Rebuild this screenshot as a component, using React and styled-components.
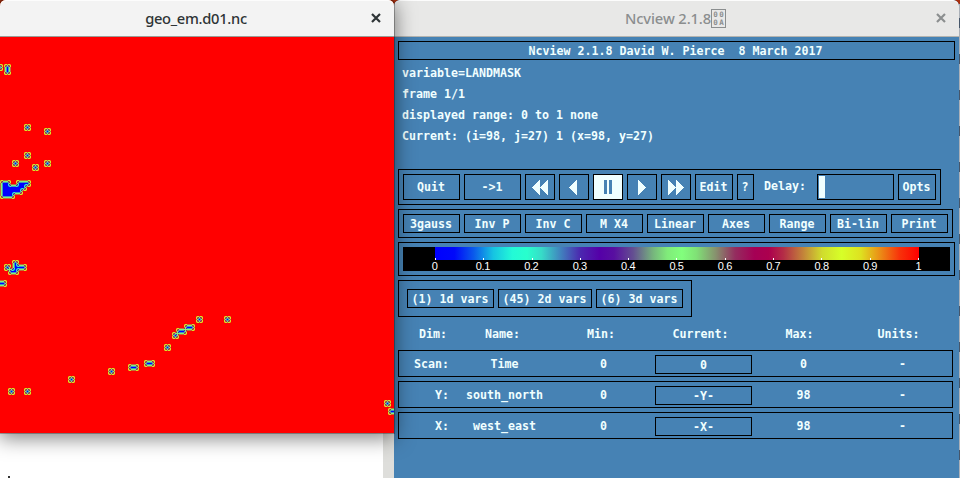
import React from "react";
import styled, { createGlobalStyle, css } from "styled-components";

const INK = "#f0ffff";
const STEEL = "#4682b4";

const GlobalStyle = createGlobalStyle`
  * { box-sizing: border-box; }
  html, body { margin: 0; padding: 0; }
  body { width: 960px; height: 478px; overflow: hidden; background: #fff; }
`;

const Desktop = styled.main`
  display: flex;
  width: 960px;
  height: 478px;
  overflow: hidden;
  background: #a8300f;
`;

const LeftColumn = styled.div`
  display: flex;
  flex-direction: column;
  flex: none;
  width: 394px;
  height: 478px;
  position: relative;
  z-index: 1;
`;

const MapWindow = styled.section`
  flex: none;
  height: 433px;
  position: relative;
  border-radius: 5px 5px 0 0;
  box-shadow: 0 4px 20px 1px rgba(0, 0, 0, 0.5), 0 0 0 1px rgba(0, 0, 0, 0.28);
`;

const TitleBar = styled.header`
  display: grid;
  grid-template-columns: 1fr;
  align-items: center;
  height: 37px;
  position: relative;
  font: 500 14.7px/20px "Noto Sans", "Open Sans", sans-serif;
  border-bottom: 1px solid ${(p) => (p.$active ? "#9b9b95" : "#b4b4b0")};
  border-radius: 6px 6px 0 0;
  color: ${(p) => (p.$active ? "#2e3436" : "#8b8e8f")};
  background: ${(p) => (p.$active ? "#f3f3f3" : "#e8e8e7")};
  box-shadow: inset 0 1px 0 #fcfcfc;
`;

const Title = styled.h1`
  display: flex;
  justify-content: center;
  align-items: center;
  margin: 0;
  padding-right: ${(p) => p.$shift || 0}px;
  font: inherit;
  letter-spacing: ${(p) => p.$track || 0}px;
  white-space: pre;
`;

const CloseIcon = styled.svg`
  position: absolute;
  top: 13px;
  right: ${(p) => p.$right}px;
  width: 10px;
  height: 10px;
  fill: none;
  stroke: currentColor;
  stroke-width: 2.2;
`;

const MissingGlyph = styled.span`
  display: grid;
  grid-template-columns: 6px 6px;
  justify-content: center;
  align-content: center;
  justify-items: center;
  width: 15px;
  height: 19px;
  margin-top: 1px;
  border: 1px solid currentColor;
  font: bold 7.5px/8px "DejaVu Sans Mono", monospace;
  letter-spacing: 0;
`;

const MapSvg = styled.svg`
  display: block;
  width: 394px;
  height: 396px;
  background: #f00;
`;

const Underlay = styled.div`
  display: flex;
  flex: 1;
  position: relative;
  z-index: -1;
  background: #fff;
`;

const Paper = styled.div`
  display: flex;
  align-items: flex-end;
  flex: 1;
  padding-left: 8px;
  background: #fff;
`;

const Speck = styled.i`
  width: 2px;
  height: 2px;
  background: #333;
`;

const PaperEdge = styled.div`
  width: 11px;
  background: #dededb;
`;

const MainWindow = styled.section`
  flex: none;
  width: 565px;
  height: 478px;
  background: ${STEEL};
  border-radius: 6px 6px 0 0;
  overflow: hidden;
  color: ${INK};
  font: bold 11.63px/17px "DejaVu Sans Mono", "Liberation Mono", monospace;
`;

const Body = styled.div`
  display: flex;
  flex-direction: column;
  align-items: flex-start;
  gap: 4px;
  padding: 4px 4px 0;
  white-space: pre;
`;

const framed = css`
  border: 1px solid #000;
`;

const Banner = styled.div`
  ${framed}
  width: 557px;
  height: 19px;
  padding-right: 2px;
  line-height: 18px;
  text-align: center;
`;

const Info = styled.div`
  height: 102px;
  padding-left: 4px;
  margin-top: -1px;
  line-height: 21px;
`;

const Group = styled.div`
  ${framed}
  display: flex;
  gap: 4px;
  width: ${(p) => p.$w}px;
  height: ${(p) => p.$h}px;
  padding: ${(p) => p.$pad || "4px"};
`;

const Button = styled.button`
  ${framed}
  display: flex;
  align-items: center;
  justify-content: center;
  flex: none;
  width: ${(p) => p.$w || 57}px;
  height: 100%;
  margin: 0;
  padding: ${(p) => (p.$low ? "2px 1px 0 0" : "0 1px 0 0")};
  font: inherit;
  white-space: pre;
  color: ${(p) => (p.$on ? STEEL : INK)};
  background: ${(p) => (p.$on ? INK : "transparent")};
`;

const Glyph = styled.svg`
  flex: none;
  width: 20px;
  height: 18px;
  margin-left: 1px;
  fill: currentColor;
  shape-rendering: crispEdges;
`;

const DelayLabel = styled.span`
  width: 55px;
  padding-left: 6px;
  line-height: 24px;
`;

const DelayTrack = styled.div`
  ${framed}
  width: 77px;
  padding: 1px;
`;

const DelayThumb = styled.div`
  width: 6px;
  height: 22px;
  background: ${INK};
`;

const ColorBar = styled.div`
  width: 547px;
  height: 24px;
  padding: 0 32px;
  background: #000;
`;

const Ramp = styled.div`
  display: flex;
  align-items: flex-end;
  justify-content: space-between;
  width: 484px;
  height: 13px;
`;

const Tick = styled.i`
  width: 1px;
  height: 2px;
  background: #fff;
`;

const Scale = styled.div`
  display: flex;
  justify-content: space-between;
  width: 484px;
  font: 11px/12px "Liberation Sans", Arial, sans-serif;
  color: #fff;
`;

const ScaleMark = styled.span`
  display: flex;
  justify-content: center;
  width: 1px;
  margin-left: -1px;
  letter-spacing: -0.4px;
`;

const DimHead = styled.div`
  display: grid;
  grid-template-columns: 49px 111px 86px 113px 85px 113px;
  height: 25px;
  line-height: 27px;
  text-align: center;
`;

const DimRow = styled.div`
  ${framed}
  display: grid;
  grid-template-columns: 50px 111px 87px 113px 87px 111px;
  width: 555px;
  height: 27px;
  line-height: 26px;
  text-align: center;
`;

const DimCell = styled.span`
  text-align: ${(p) => (p.$right ? "right" : "center")};
`;

const CurrentButton = styled(Button)`
  width: 97px;
  height: 19px;
  margin: 4px 0 0 8px;
  padding: 0;
`;

const Behind = styled.div`
  flex: 1;
  margin-top: 4px;
  background: repeating-linear-gradient(#aab0b8 0 14px, #46566a 14px 24px, #aab0b8 24px 36px);
`;

const STOPS = [
  [0, 0, 0, 255], [0.04, 0, 8, 250], [0.08, 10, 90, 235], [0.12, 22, 195, 226],
  [0.16, 35, 250, 215], [0.19, 40, 255, 205], [0.22, 55, 220, 200], [0.26, 65, 130, 190],
  [0.3, 75, 40, 175], [0.34, 85, 0, 168], [0.37, 88, 15, 160], [0.41, 100, 80, 145],
  [0.45, 118, 180, 125], [0.48, 128, 235, 122], [0.51, 130, 255, 125], [0.54, 128, 225, 118],
  [0.58, 135, 145, 110], [0.62, 148, 45, 95], [0.66, 165, 0, 85], [0.69, 172, 0, 78],
  [0.72, 180, 45, 70], [0.76, 195, 130, 58], [0.8, 208, 220, 45], [0.84, 215, 255, 40],
  [0.88, 222, 225, 32], [0.92, 235, 140, 22], [0.96, 248, 50, 10], [1, 255, 0, 0],
];

function colorAt(v) {
  const i = Math.max(1, STOPS.findIndex((s) => s[0] >= v));
  const a = STOPS[i - 1];
  const b = STOPS[i];
  const t = (v - a[0]) / (b[0] - a[0]);
  const ch = (k) => Math.round(a[k] + (b[k] - a[k]) * t);
  return `rgb(${ch(1)},${ch(2)},${ch(3)})`;
}

const GradientRamp = styled(Ramp)`
  background: linear-gradient(to right, ${STOPS.map((s) => `rgb(${s[1]},${s[2]},${s[3]}) ${s[0] * 100}%`).join(", ")});
`;

/* Water cells of the mask: a row position followed by its column positions. */
const WATER = [
  [67, -1, 7], [71, 7], [127, 27], [131, 47], [155, 27], [163, 15, 47], [167, 35],
  [183, 3, 7, 19, 23, 27], [187, 3, 7, 11, 15, 19, 23], [191, 3, 7, 11, 15, 19], [195, 3, 7, 11],
  [263, 15], [267, 7, 15, 19, 23], [271, 11, 15], [283, -1, 3],
  [319, 199, 227], [327, 187, 191], [331, 179, 183], [335, 175], [347, 167],
  [363, 147, 151], [367, 131, 135], [371, 111], [379, 71], [391, 11, 27],
  [403, 387], [411, 391, 395],
];

/* Bilinear blend of the 4px mask cells, one entry per pixel that is not full land. */
function blendMask() {
  const depth = new Map();
  WATER.forEach(([y, ...xs]) => xs.forEach((x) => {
    for (let dy = -3; dy <= 3; dy++) for (let dx = -3; dx <= 3; dx++) {
      const key = `${x + dx},${y + dy}`;
      const w = (1 - Math.abs(dx) / 4) * (1 - Math.abs(dy) / 4);
      depth.set(key, (depth.get(key) || 0) + w);
    }
  }));
  return [...depth].map(([key, d]) => {
    const [x, y] = key.split(",").map(Number);
    return { x, y, fill: colorAt(1 - Math.min(1, d)) };
  });
}
const PIXELS = blendMask();

const Close = ({ right }) => (
  <CloseIcon $right={right} viewBox="0 0 10 10"><path d="M1 1 9 9M9 1 1 9" /></CloseIcon>
);

const ICONS = {
  rewind: "M10 2V17L2 9.5ZM18 2V17L10 9.5Z",
  back: "M13 2V17L5 9.5Z",
  pause: "M6 2h3v14H6zM11 2h3v14h-3z",
  play: "M6 2V17L14 9.5Z",
  forward: "M2 2V17L10 9.5ZM10 2V17L18 9.5Z",
};

const IconButton = ({ name, on }) => (
  <Button $w={30} $on={on} aria-label={name}>
    <Glyph viewBox="0 0 20 18"><path d={ICONS[name]} /></Glyph>
  </Button>
);

const OPTIONS = ["3gauss", "Inv P", "Inv C", "M X4", "Linear", "Axes", "Range", "Bi-lin", "Print"];
const MARKS = ["0", "0.1", "0.2", "0.3", "0.4", "0.5", "0.6", "0.7", "0.8", "0.9", "1"];
const HEADS = ["Dim:", "Name:", "Min:", "Current:", "Max:", "Units:"];
const DIMS = [
  ["Scan:", "Time", "0", "0", "0"],
  ["Y:", "south_north", "0", "-Y-", "98"],
  ["X:", "west_east", "0", "-X-", "98"],
];

export default function App() {
  return (
    <Desktop>
      <GlobalStyle />
      <LeftColumn>
        <MapWindow>
          <TitleBar $active>
            <Title $shift={2} $track={-0.3}>geo_em.d01.nc</Title>
            <Close right={13} />
          </TitleBar>
          <MapSvg viewBox="0 37 394 396" shapeRendering="crispEdges">
            {PIXELS.map((p) => <rect key={`${p.x}-${p.y}`} x={p.x} y={p.y} width="1" height="1" fill={p.fill} />)}
          </MapSvg>
        </MapWindow>
        <Underlay>
          <Paper><Speck /></Paper>
          <PaperEdge />
        </Underlay>
      </LeftColumn>
      <MainWindow>
        <TitleBar>
          <Title $shift={2} $track={-0.1}>Ncview 2.1.8<MissingGlyph><span>0</span><span>0</span><span>0</span><span>A</span></MissingGlyph></Title>
          <Close right={13} />
        </TitleBar>
        <Body>
          <Banner>Ncview 2.1.8 David W. Pierce  8 March 2017</Banner>
          <Info>
            <div>variable=LANDMASK</div>
            <div>frame 1/1</div>
            <div>displayed range: 0 to 1 none</div>
            <div>Current: (i=98, j=27) 1 (x=98, y=27)</div>
          </Info>
          <Group $w={543} $h={36}>
            <Button>Quit</Button>
            <Button>{"->1"}</Button>
            <IconButton name="rewind" />
            <IconButton name="back" />
            <IconButton name="pause" on />
            <IconButton name="play" />
            <IconButton name="forward" />
            <Button $w={38}>Edit</Button>
            <Button $w={17}>?</Button>
            <DelayLabel>Delay:</DelayLabel>
            <DelayTrack><DelayThumb /></DelayTrack>
            <Button $w={38}>Opts</Button>
          </Group>
          <Group $w={555} $h={29}>
            {OPTIONS.map((o) => <Button key={o} $low>{o}</Button>)}
          </Group>
          <Group $w={557} $h={34}>
            <ColorBar>
              <GradientRamp>{MARKS.map((m) => <Tick key={m} />)}</GradientRamp>
              <Scale>{MARKS.map((m) => <ScaleMark key={m}>{m}</ScaleMark>)}</Scale>
            </ColorBar>
          </Group>
          <Group $w={294} $h={37} $pad="8px">
            <Button $w={87} $low>(1) 1d vars</Button>
            <Button $w={94} $low>(45) 2d vars</Button>
            <Button $w={87} $low>(6) 3d vars</Button>
          </Group>
          <DimHead>
            {HEADS.map((h, i) => <DimCell key={h} $right={i === 0}>{h}</DimCell>)}
          </DimHead>
          {DIMS.map(([dim, name, min, cur, max]) => (
            <DimRow key={dim}>
              <DimCell $right>{dim}</DimCell>
              <DimCell>{name}</DimCell>
              <DimCell>{min}</DimCell>
              <CurrentButton>{cur}</CurrentButton>
              <DimCell>{max}</DimCell>
              <DimCell>-</DimCell>
            </DimRow>
          ))}
        </Body>
      </MainWindow>
      <Behind />
    </Desktop>
  );
}
